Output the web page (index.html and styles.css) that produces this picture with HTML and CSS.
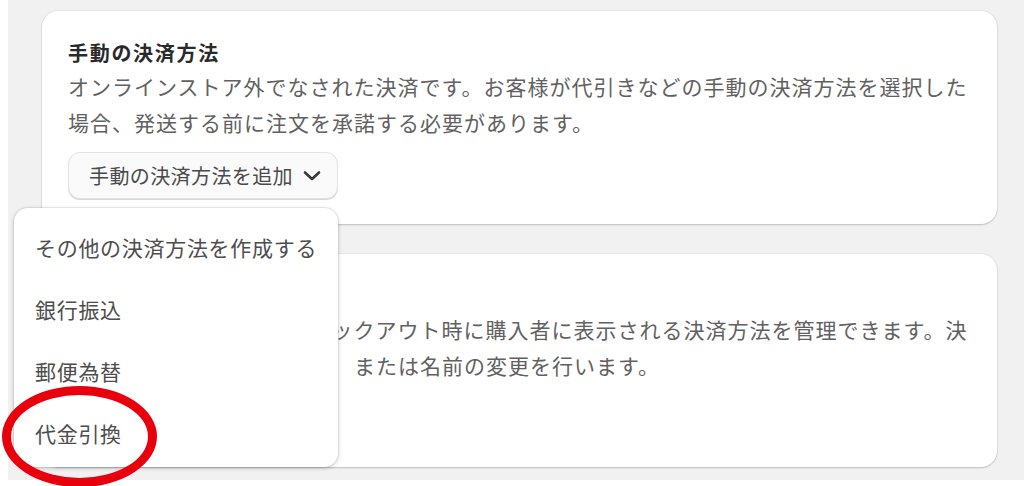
FILE: index.html
```html
<!DOCTYPE html>
<html lang="ja">
<head>
<meta charset="utf-8">
<title>決済</title>
<link rel="stylesheet" href="styles.css">
</head>
<body>

<div class="page">
  <section class="card">
    <h2>手動の決済方法</h2>
    <p>オンラインストア外でなされた決済です。お客様が代引きなどの手動の決済方法を選択した場合、発送する前に注文を承諾する必要があります。</p>
    <button class="btn">手動の決済方法を追加
      <svg width="18" height="12" viewBox="0 0 18 12"><path d="M2 2.5l7 6.5 7-6.5" /></svg>
    </button>
  </section>

  <section class="card">
    <h2>対応している決済方法</h2>
    <p>オンラインストアでのチェックアウト時に購入者に表示される決済方法を管理できます。決済方法の有効化と並べ替え　または名前の変更を行います。</p>
    <button class="btn">決済方法を追加
      <svg width="18" height="12" viewBox="0 0 18 12"><path d="M2 2.5l7 6.5 7-6.5" /></svg>
    </button>
  </section>
</div>

<!-- popover opened from the "add manual method" button -->
<ul class="menu">
  <li>その他の決済方法を作成する</li>
  <li>銀行振込</li>
  <li>郵便為替</li>
  <li>代金引換</li>
</ul>

<div class="mark"></div>

</body>
</html>
```

FILE: styles.css
```css
body { margin: 0; background: #fff;
  font-family: "Noto Sans CJK JP", "Noto Sans", sans-serif;
  text-spacing-trim: space-all; }

.page { margin-left: 8px; height: 469px;
  background: #f1f1f1;
  padding: 11px 27px 0 34px;
  display: flex; flex-direction: column; gap: 30px; }

.card { background: #fff; border-radius: 16px;
  padding: 27px 26px 25px 26px;
  box-shadow: 0 1px 2px rgba(0,0,0,.18), 0 0 0 1px rgba(0,0,0,.04); }

.card h2 { margin: 0; font-size: 20px; line-height: 30px;
  font-weight: 700; letter-spacing: 1.7px; color: #2a2a2a; }

.card p { margin: 0; font-size: 21px; line-height: 36px;
  letter-spacing: 1px; color: #616161; }

.btn { margin-top: 12px; height: 47px;
  display: inline-flex; align-items: center; gap: 10px;
  padding: 0 16px 0 20px;
  font-family: inherit; font-size: 20px; letter-spacing: .4px;
  color: #4a4a4a; background: #fafafa;
  border: 1px solid #e3e3e3; border-radius: 12px;
  box-shadow: 0 1px 0 #d6d6d6; }
.btn svg { fill: none; stroke: #3a3a3a; stroke-width: 2.6;
  stroke-linecap: round; stroke-linejoin: round; }

.menu { position: absolute; left: 14px; top: 208px;
  width: 324px; height: 259px; box-sizing: border-box;
  margin: 0; padding: 8px 0 0 21px; list-style: none;
  background: #fff; border-radius: 14px;
  box-shadow: 0 1px 4px rgba(0,0,0,.22), 0 0 0 1px rgba(0,0,0,.05); }
.menu li { height: 62px; line-height: 62px;
  font-size: 21px; letter-spacing: .7px; color: #4d4d4d; }

/* red ring drawn over the screenshot */
.mark { position: absolute; left: 2px; top: 386px;
  width: 155px; height: 101px; box-sizing: border-box;
  border: 9px solid #e8000d; border-radius: 50%; }
```
